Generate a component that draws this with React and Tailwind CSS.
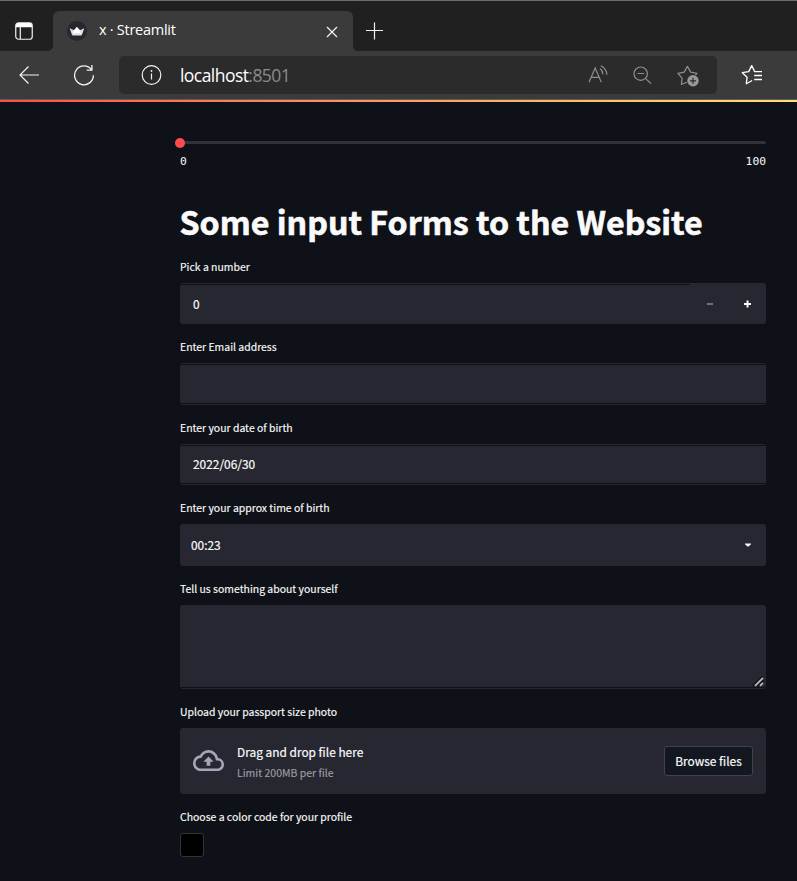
const sans = "font-['Noto_Sans_CJK_SC',sans-serif]";

function Field({ label, children }) {
  return (
    <div className="flex flex-col gap-2">
      <label className="flex h-4 items-center whitespace-nowrap text-[10.45px] leading-4 text-[#fafafa] [-webkit-text-stroke:0.15px_#fafafa]">{label}</label>
      {children}
    </div>
  );
}

function TabBar() {
  return (
    <div className="flex h-[51px] border-t border-[#6b6b6b] bg-[#3b3b3b]">
      <div className="flex w-[53px] items-center justify-center rounded-br-[5px] bg-[#202020] pr-[5px] pt-[10px]">
        <svg width="18" height="18" viewBox="0 0 18 18" fill="none">
          <rect x="0.75" y="0.75" width="16.5" height="16.5" rx="2.8" stroke="#f2f2f2" strokeWidth="1.2" />
          <path d="M1 5.3V3.5A2.5 2.5 0 0 1 3.5 1h11A2.5 2.5 0 0 1 17 3.5v1.8Z" fill="#fff" />
          <path d="M5.3 5v12" stroke="#f2f2f2" strokeWidth="1.2" />
        </svg>
      </div>
      <div className="w-[300px] bg-[#202020] pt-[10px]">
        <div className="flex h-10 items-center rounded-t-[6px] bg-[#3b3b3b] px-[14px]">
          <svg width="20" height="20" viewBox="0 0 20 20" className="shrink-0">
            <circle cx="10" cy="10" r="10" fill="#262730" />
            <path d="M2.6 7.2 7 9.2 9.9 6 12.9 9.2 17.3 7.2 15 13.7q-.2.7-.9.7H5.9q-.7 0-.9-.7Z" fill="#dcdcdc" />
            <path d="M9.9 6 12.9 9.2 14 12.2H6L7 9.2Z" fill="#fff" />
          </svg>
          <span className="ml-3 mt-[-2px] grow whitespace-nowrap font-['Open_Sans',sans-serif] text-[14.5px] tracking-[-0.27px] text-white">x · Streamlit</span>
          <svg width="12" height="12" viewBox="0 0 12 12" stroke="#f2f2f2" strokeWidth="1.2" className="mr-[1px] mt-[1px]">
            <path d="M1 1l10 10M11 1L1 11" />
          </svg>
        </div>
      </div>
      <div className="flex grow items-center rounded-bl-[5px] bg-[#202020] pl-[13px] pt-[10px]">
        <svg width="18" height="18" viewBox="0 0 18 18" stroke="#f2f2f2" strokeWidth="1.2">
          <path d="M8.5 .5v17M0 8.5h17" />
        </svg>
      </div>
    </div>
  );
}

function Toolbar() {
  return (
    <div className="flex h-[48px] items-center bg-[#3b3b3b]">
      <svg width="20" height="18" viewBox="0 0 20 18" fill="none" stroke="#f2f2f2" strokeWidth="1.2" className="mb-px ml-[19px]">
        <path d="M9.5.5 1 9l8.500 8.500M1 9h19" />
      </svg>
      <svg width="22" height="22" viewBox="0 0 22 22" fill="none" stroke="#f2f2f2" strokeWidth="1.3" className="ml-[34px]">
        <path d="M18.6 5.8A9.4 9.4 0 1 0 20.4 11.2M18.9 1v5.1h-5.2" />
      </svg>
      <div className="ml-[24px] flex h-[38px] w-[598px] items-center rounded-[5px] bg-[#2b2b2b] pl-[22px]">
        <svg width="21" height="20" viewBox="-0.5 0 21 20" fill="none" stroke="#f2f2f2" strokeWidth="1.2">
          <circle cx="10" cy="10" r="9.3" />
          <path d="M10 8.5v6" />
          <circle cx="10" cy="6" r="0.9" fill="#f2f2f2" stroke="none" />
        </svg>
        <div className="ml-[18px] w-[408px] whitespace-nowrap font-['Open_Sans',sans-serif] text-[17.5px] leading-6 tracking-[-0.55px] text-white">
          localhost<span className="text-[#8b8b8b]">:8501</span>
        </div>
        <svg width="20" height="20" viewBox="0 0 20 20" fill="none" stroke="#8e8e8e" strokeWidth="1.2">
          <path d="M1 17.3 7.2 3 13.3 17.3M3.2 12.3h8" />
          <path d="M12 3.5q2.6 1.8 2.800 5.7M12.8.7q5.500 2.500 6.100 8.900" />
        </svg>
        <svg width="19" height="19" viewBox="0 0 19 19" fill="none" stroke="#8e8e8e" strokeWidth="1.2" className="ml-[25px]">
          <circle cx="7.7" cy="7.7" r="6.7" />
          <path d="M12.6 12.6 18 17.5M4.5 7.5h6.6" />
        </svg>
        <svg width="22" height="22" viewBox="0 0 22 22" fill="none" className="ml-[25px] mt-[2px]">
          <path d="M9.8 17.2 4.4 19.5 5.1 13.1 .9 8.4 7.2 7.1 10.4 1.4 13.6 7.1 19.9 8.4 18.5 10" stroke="#8e8e8e" strokeWidth="1.2" strokeLinejoin="round" />
          <circle cx="16" cy="15.8" r="5.7" fill="#989898" />
          <path d="M16 12.8v6M13 15.8h6" stroke="#2b2b2b" strokeWidth="1.2" />
        </svg>
      </div>
      <svg width="22" height="22" viewBox="0 0 22 22" fill="none" stroke="#fff" strokeWidth="1.3" strokeLinejoin="round" className="ml-[24px]">
        <path d="M11.2 16.5 5.3 19.7 6.1 13.3 1.3 8.7 7.7 7.6 10.7 1.6 13.7 7.6H21" />
        <path d="M13.2 11.5h7.8M13.2 15.5h7.8" />
      </svg>
    </div>
  );
}

const lined = "h-full border-y border-[#0f1118] bg-[#262730]";
const value = "text-[11.9px] [-webkit-text-stroke:0.2px_#fafafa]";

export default function App() {
  return (
    <div className={`h-[881px] w-[797px] overflow-hidden bg-[#0e1117] text-[#fafafa] ${sans}`}>
      <TabBar />
      <Toolbar />
      <div className="h-px bg-[#5c5c5c]" />
      <div className="h-[2px] bg-linear-to-r from-[#ff4b4b] to-[#fffd80] bg-[length:993px_2px]" />

      <main className="ml-[180px] w-[586px]">
        <div className="relative mt-[39px] h-[3px] rounded-full bg-[#31333c]">
          <div className="absolute -left-[5px] -top-[3px] size-[10px] rounded-full bg-[#ff4b4b]" />
        </div>
        <div className="mt-[10px] flex h-4 justify-between font-['DejaVu_Sans_Mono',monospace] text-[11.3px] leading-4">
          <span>0</span>
          <span>100</span>
        </div>
        <h1 className="-ml-[0.5px] mt-[30px] h-[42px] whitespace-nowrap text-[32.2px] font-bold leading-[42px] [-webkit-text-stroke:0.6px_#fafafa]">Some input Forms to the Website</h1>

        <form className="mt-[17px] flex flex-col gap-[15px]">
          <Field label="Pick a number">
            <div className="flex h-[41px] overflow-hidden rounded-[3px] bg-[#262730] pt-px">
              <div className={`flex grow items-center border-t border-[#0f1118] pb-[2px] pl-[13px] ${value}`}>0</div>
              <div className="flex w-[76px] items-center">
                <svg width="76" height="10" viewBox="0 0 76 10">
                  <path d="M17 5h6" stroke="#70717e" strokeWidth="2" />
                  <path d="M54 5h7M57.5 1.5v7" stroke="#fafafa" strokeWidth="2" />
                </svg>
              </div>
            </div>
          </Field>
          <Field label="Enter Email address">
            <div className="h-[42px] overflow-hidden rounded-[3px] bg-[#262730] py-px">
              <div className={lined} />
            </div>
          </Field>
          <Field label="Enter your date of birth">
            <div className="h-[41px] overflow-hidden rounded-[3px] bg-[#262730] py-px">
              <div className={`flex items-center pb-px pl-[13px] ${value} ${lined}`}>2022/06/30</div>
            </div>
          </Field>
          <Field label="Enter your approx time of birth">
            <div className={`flex h-[42px] items-center justify-between rounded-[3px] bg-[#262730] pl-[11px] pr-[15px] ${value}`}>
              <span className="-mt-px">00:23</span>
              <svg width="6" height="4" viewBox="0 0 6 4">
                <path d="M0 .4h6v.8L3.5 3.6h-1L0 1.2Z" fill="#fafafa" />
              </svg>
            </div>
          </Field>
          <Field label="Tell us something about yourself">
            <div className="h-[84px] overflow-hidden rounded-[3px] bg-[#262730] pb-px">
              <div className="flex h-full items-end justify-end border-b border-[#0f1118] pr-[2px]">
                <svg width="11" height="11" viewBox="0 0 11 11">
                  <path d="M0 10 10 0M4.5 10.5 10.5 4.5" stroke="#0d0d10" strokeWidth="1.4" />
                  <path d="M2 9.8 10 1.8M7 9.8 10 6.8" stroke="#b8b8b8" strokeWidth="1.9" />
                </svg>
              </div>
            </div>
          </Field>
          <Field label="Upload your passport size photo">
            <div className="flex h-[66px] items-center rounded-[3px] bg-[#262730] px-[13px]">
              <svg width="31" height="21" viewBox="0 0 24 16" preserveAspectRatio="none" fill="#a3a8b8" className="-mt-px">
                <path d="M19.35 6.04A7.49 7.49 0 0 0 12 0C9.11 0 6.6 1.64 5.35 4.04A5.994 5.994 0 0 0 0 10c0 3.31 2.69 6 6 6h13c2.76 0 5-2.24 5-5 0-2.64-2.05-4.78-4.65-4.96ZM19 14H6c-2.21 0-4-1.79-4-4 0-2.05 1.53-3.76 3.56-3.97l1.07-.11.5-.95A5.469 5.469 0 0 1 12 2c2.62 0 4.88 1.86 5.39 4.43l.3 1.5 1.53.11A2.98 2.98 0 0 1 22 11c0 1.65-1.35 3-3 3ZM8 9h2.55v3h2.9V9H16l-4-4Z" />
              </svg>
              <div className="ml-[13px] flex grow flex-col pt-px">
                <span className={`leading-[21px] ${value}`}>Drag and drop file here</span>
                <span className="text-[10.5px] leading-[21px] text-[#9c9da3] [-webkit-text-stroke:0.15px_#9c9da3]">Limit 200MB per file</span>
              </div>
              <button type="button" className={`h-[30px] w-[89px] whitespace-nowrap rounded-[3px] border border-[#41434b] bg-[#131720] pb-px leading-[27px] ${value}`}>Browse files</button>
            </div>
          </Field>
          <Field label="Choose a color code for your profile">
            <div className="size-6 rounded-[3px] border border-[#31333c] bg-black" />
          </Field>
        </form>
      </main>
    </div>
  );
}
